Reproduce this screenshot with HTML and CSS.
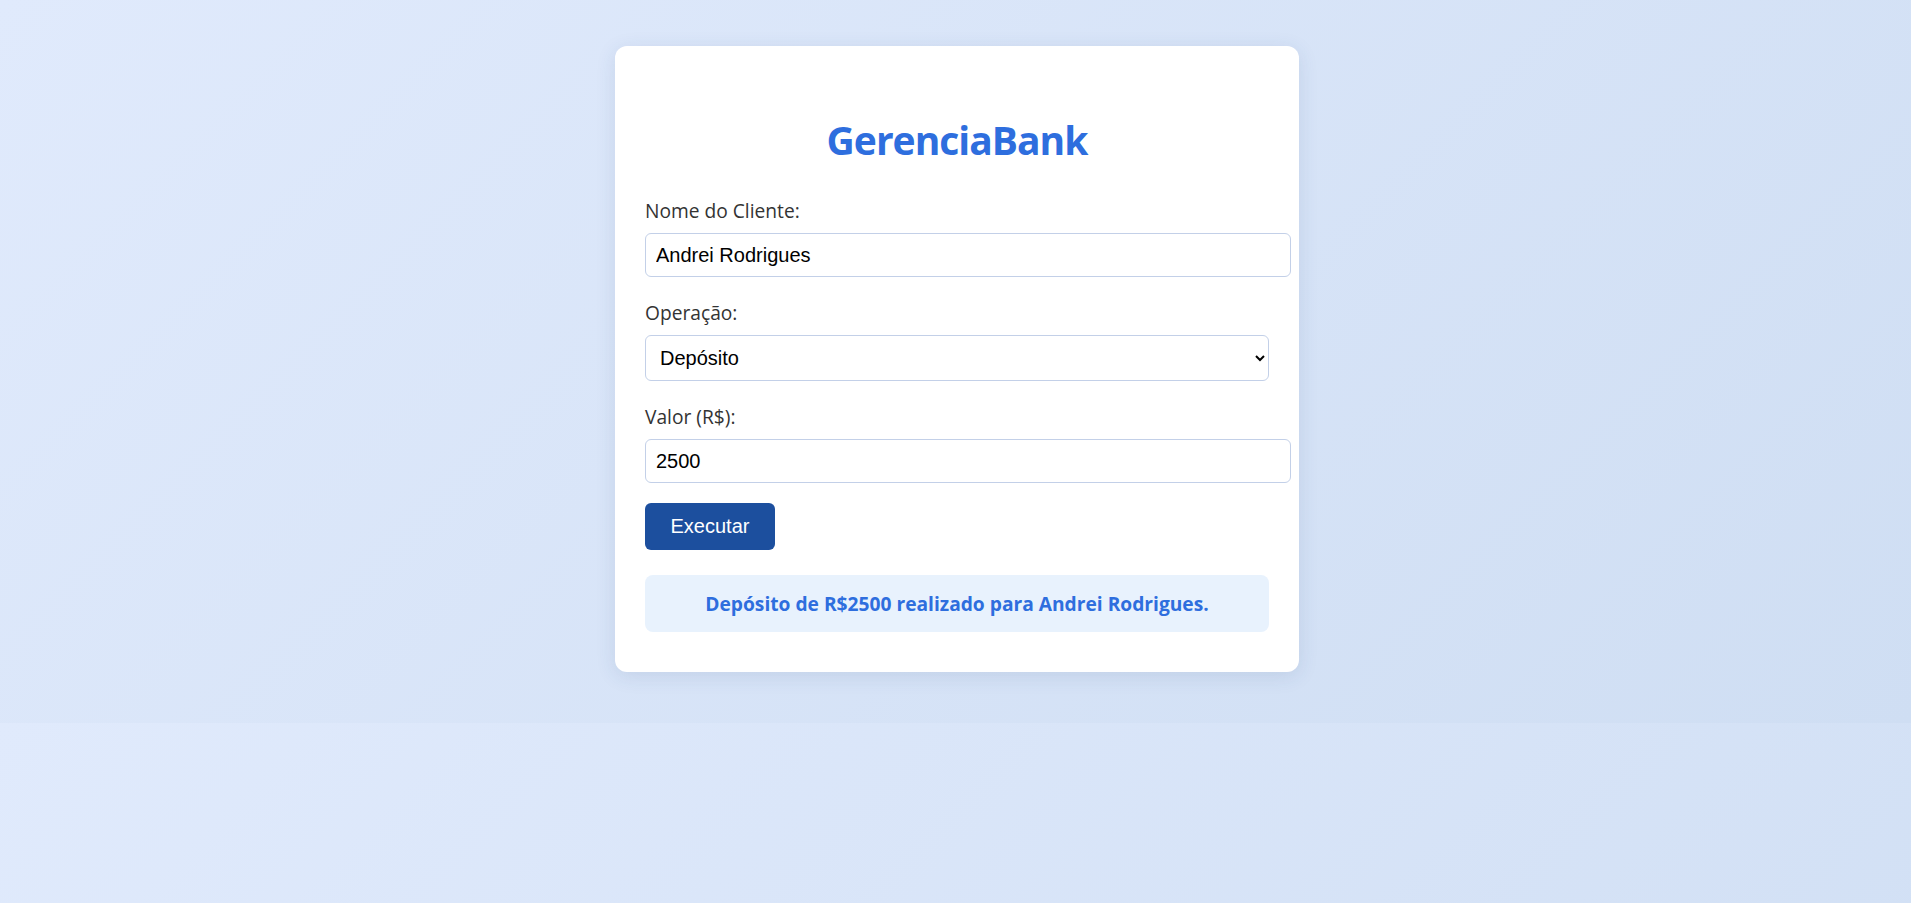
FILE: index.html
```html
<!DOCTYPE html>
<html lang="pt-BR">
<head>
<meta charset="utf-8">
<title>GerenciaBank</title>
<link rel="stylesheet" href="styles.css">
</head>
<body>
  <main class="card">
    <h1 class="title">GerenciaBank</h1>
    <form class="form">
      <div class="group">
        <label class="label" for="nome">Nome do Cliente:</label>
        <input class="input" id="nome" type="text" value="Andrei Rodrigues">
      </div>
      <div class="group">
        <label class="label" for="op">Operação:</label>
        <select class="select" id="op">
          <option selected>Depósito</option>
          <option>Saque</option>
        </select>
      </div>
      <div class="group group-last">
        <label class="label" for="valor">Valor (R$):</label>
        <input class="input" id="valor" type="number" value="2500">
      </div>
      <button class="btn" type="button">Executar</button>
    </form>
    <div class="message">Depósito de R$2500 realizado para Andrei Rodrigues.</div>
  </main>
</body>
</html>
```
FILE: styles.css
```css
body {
  margin: 0;
  padding: 46px 0 51px 3px;
  background: linear-gradient(135deg, #e0eafc, #cfdef3);
  font-family: "Open Sans", "Noto Sans", sans-serif;
}

.card {
  width: 624px;
  margin: 0 auto;
  padding: 30px 30px 40px;
  background: #ffffff;
  border-radius: 12px;
  box-shadow: 0 4px 20px rgba(40, 70, 120, 0.12);
}

.title {
  margin: 37px 0 31px;
  text-align: center;
  font-size: 39px;
  letter-spacing: -1px;
  line-height: 54px;
  font-weight: 700;
  color: #2e6ede;
}

.form {
  margin: 0;
}

.group {
  margin-bottom: 23px;
}

.group-last {
  margin-bottom: 20px;
}

.label {
  display: block;
  margin-bottom: 10px;
  font-size: 19.2px;
  line-height: 25px;
  color: #333333;
}

.input,
.select {
  display: block;
  font-family: "Liberation Sans", Arial, sans-serif;
  font-size: 20px;
  color: #000;
  border: 1px solid #c3d0e8;
  border-radius: 6px;
  background: #fff;
  outline: none;
}

.input {
  width: 100%;
  padding: 9.5px 10px;
  margin: 0;
}

.select {
  width: 100%;
  padding: 10px;
  margin: 0;
  height: 46px;
}

.btn {
  display: block;
  padding: 12px 25.5px;
  border: none;
  border-radius: 6px;
  background: #1c4f9e;
  color: #ffffff;
  font-family: "Liberation Sans", Arial, sans-serif;
  font-size: 20px;
  line-height: 23px;
}

.message {
  margin-top: 25px;
  padding: 16px;
  border-radius: 8px;
  background: #e8f2fd;
  color: #2e6ede;
  font-size: 19.2px;
  line-height: 25px;
  font-weight: 700;
  text-align: center;
}
```
